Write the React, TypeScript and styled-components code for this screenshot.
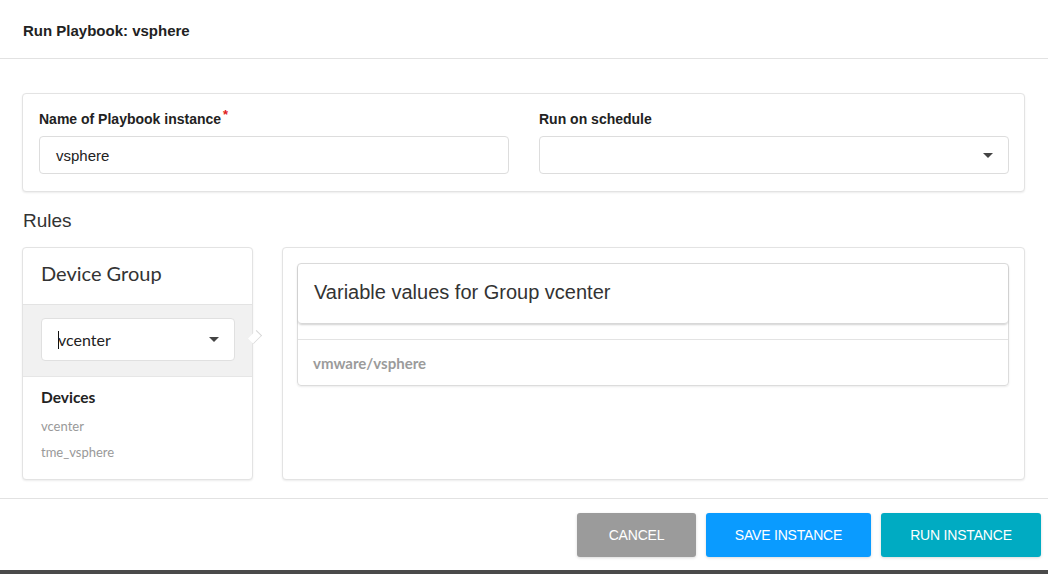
import React from "react";
import styled, { createGlobalStyle } from "styled-components";

const Global = createGlobalStyle`
  html, body { margin: 0; padding: 0; background: #fff; }
  body { font-family: "Liberation Sans", Arial, sans-serif; color: #222; }
  * { box-sizing: border-box; }
`;

const Page = styled.div`
  width: 1048px;
  height: 574px;
  display: flex;
  flex-direction: column;
  background: #fff;
  overflow: hidden;
`;

const Header = styled.div`
  height: 59px;
  flex: none;
  display: flex;
  align-items: center;
  padding: 3px 23px 0;
  border-bottom: 1px solid #e2e2e2;
`;

const Title = styled.h1`
  margin: 0;
  font-size: 15px;
  font-weight: 700;
  color: #222;
`;

const Content = styled.div`
  flex: 1;
  padding: 34px 23px 0 22px;
  display: flex;
  flex-direction: column;
`;

const Card = styled.div`
  background: #fff;
  border: 1px solid #e3e3e3;
  border-radius: 4px;
  box-shadow: 0 1px 2px rgba(0, 0, 0, 0.08);
`;

const TopCard = styled(Card)`
  height: 99px;
  padding: 15px 15px 0 16px;
  display: grid;
  grid-template-columns: 1fr 1fr;
  column-gap: 30px;
`;

const Field = styled.div`
  display: flex;
  flex-direction: column;
`;

const Label = styled.label`
  font-size: 14px;
  font-weight: 700;
  line-height: 20px;
  height: 20px;
  color: #222;
  margin-bottom: 7px;
`;

const Required = styled.span`
  color: #e02020;
  font-size: 13px;
  line-height: 0;
  position: relative;
  top: -5px;
  margin-left: 2px;
`;

const Input = styled.div`
  height: 38px;
  border: 1px solid #ddd;
  border-radius: 4px;
  padding: 0 16px;
  display: flex;
  align-items: center;
  font-size: 15px;
  color: #222;
`;

const Caret = styled.span`
  width: 0;
  height: 0;
  border-left: 5px solid transparent;
  border-right: 5px solid transparent;
  border-top: 5px solid #444;
  margin-left: auto;
`;

const SelectBox = styled(Input)`
  padding: 0 15px 0 16px;
`;

const RulesTitle = styled.h2`
  margin: 18px 0 0 1px;
  font-size: 19px;
  font-weight: 400;
  line-height: 22px;
  color: #333;
`;

const RulesRow = styled.div`
  margin-top: 15px;
  display: flex;
  gap: 29px;
  height: 233px;
`;

const GroupCard = styled(Card)`
  width: 231px;
  position: relative;
  display: flex;
  flex-direction: column;
`;

const GroupHeader = styled.div`
  height: 57px;
  padding: 0 18px 6px;
  display: flex;
  align-items: center;
  font-family: Lato, "Liberation Sans", sans-serif;
  font-size: 20px;
  color: #333;
  border-bottom: 1px solid #e3e3e3;
`;

const GroupSelectArea = styled.div`
  background: #f1f1f1;
  padding: 13px 17px 15px 18px;
  border-bottom: 1px solid #e6e6e6;
  position: relative;
`;

const GroupSelect = styled.div`
  height: 43px;
  background: #fff;
  border: 1px solid #e0e0e0;
  border-radius: 4px;
  display: flex;
  align-items: center;
  padding: 0 15px 0 16px;
  font-family: Lato, "Liberation Sans", sans-serif;
  font-size: 16px;
  color: #222;
`;

const TextCursor = styled.span`
  display: inline-block;
  width: 1px;
  height: 18px;
  background: #111;
  margin-right: -1px;
`;

const Pointer = styled.span`
  position: absolute;
  right: -9px;
  top: 26px;
  width: 12px;
  height: 12px;
  background: #fff;
  border-top: 1px solid #d6d6d6;
  border-right: 1px solid #d6d6d6;
  transform: rotate(45deg) scaleX(0.65);
`;

const DevicesBlock = styled.div`
  padding: 10px 18px 0;
  font-family: Lato, "Liberation Sans", sans-serif;
`;

const DevicesTitle = styled.div`
  font-size: 15.5px;
  font-weight: 700;
  color: #222;
  line-height: 20px;
  margin-bottom: 6px;
`;

const DeviceItem = styled.div`
  font-size: 13px;
  color: #999;
  line-height: 26px;
`;

const VarsCard = styled(Card)`
  flex: 1;
  padding: 15px 15px 0 14px;
`;

const VarsInner = styled.div`
  border: 1px solid #dcdcdc;
  border-radius: 4px;
  box-shadow: 0 1px 2px rgba(0, 0, 0, 0.08);
`;

const VarsHeader = styled.div`
  height: 60px;
  display: flex;
  align-items: center;
  padding: 0 16px 2px;
  font-size: 20px;
  color: #333;
  border-radius: 4px;
  box-shadow: 0 1px 2px rgba(0, 0, 0, 0.18);
  border-bottom: 1px solid #d8d8d8;
`;

const VarsBody = styled.div`
  margin-top: 15px;
  border-top: 1px solid #e3e3e3;
  height: 46px;
  display: flex;
  align-items: center;
  padding: 0 15px 0 15px;
  font-family: Lato, "Liberation Sans", sans-serif;
  font-size: 15px;
  font-weight: 700;
  color: #9b9b9b;
`;

const Footer = styled.div`
  height: 72px;
  flex: none;
  border-top: 1px solid #e2e2e2;
  display: flex;
  justify-content: flex-end;
  align-items: flex-start;
  gap: 10px;
  padding: 14px 7px 0 0;
`;

const Button = styled.button<{ $bg: string; $w: number }>`
  height: 44px;
  width: ${(p) => p.$w}px;
  padding: 0;
  border: none;
  border-radius: 3px;
  background: ${(p) => p.$bg};
  color: #fff;
  font-family: "Liberation Sans", Arial, sans-serif;
  font-size: 14px;
  letter-spacing: -0.2px;
  box-shadow: 0 1px 3px rgba(0, 0, 0, 0.15);
`;

const BottomBar = styled.div`
  height: 4px;
  flex: none;
  background: #4a4a4a;
`;

export default function App() {
  return (
    <>
      <Global />
      <Page>
        <Header>
          <Title>Run Playbook: vsphere</Title>
        </Header>
        <Content>
          <TopCard>
            <Field>
              <Label>
                Name of Playbook instance<Required>*</Required>
              </Label>
              <Input>vsphere</Input>
            </Field>
            <Field>
              <Label>Run on schedule</Label>
              <SelectBox>
                <Caret />
              </SelectBox>
            </Field>
          </TopCard>
          <RulesTitle>Rules</RulesTitle>
          <RulesRow>
            <GroupCard>
              <GroupHeader>Device Group</GroupHeader>
              <GroupSelectArea>
                <GroupSelect>
                  <TextCursor />
                  vcenter
                  <Caret />
                </GroupSelect>
                <Pointer />
              </GroupSelectArea>
              <DevicesBlock>
                <DevicesTitle>Devices</DevicesTitle>
                <DeviceItem>vcenter</DeviceItem>
                <DeviceItem>tme_vsphere</DeviceItem>
              </DevicesBlock>
            </GroupCard>
            <VarsCard>
              <VarsInner>
                <VarsHeader>Variable values for Group vcenter</VarsHeader>
                <VarsBody>vmware/vsphere</VarsBody>
              </VarsInner>
            </VarsCard>
          </RulesRow>
        </Content>
        <Footer>
          <Button $bg="#9b9b9b" $w={119}>CANCEL</Button>
          <Button $bg="#0a9bff" $w={165}>SAVE INSTANCE</Button>
          <Button $bg="#00abc2" $w={160}>RUN INSTANCE</Button>
        </Footer>
        <BottomBar />
      </Page>
    </>
  );
}
